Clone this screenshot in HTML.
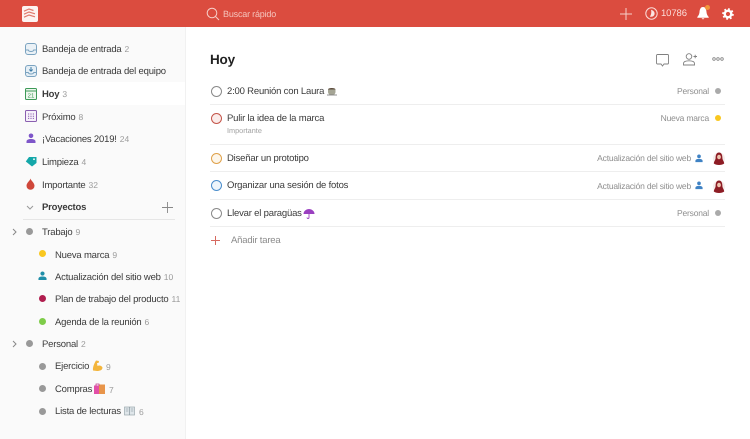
<!DOCTYPE html>
<html><head><meta charset="utf-8">
<style>
html,body{margin:0;padding:0;width:750px;height:439px;overflow:hidden;background:#fff}
body{position:relative;font-family:"Liberation Sans",sans-serif;color:#333;text-rendering:geometricPrecision}
.t{position:absolute;white-space:nowrap;font-size:9.5px;line-height:12px;letter-spacing:-.19px;color:#3a3a3a}
.t i{font-style:normal;font-size:8.5px;color:#999;margin-left:3px;letter-spacing:0}
.g{color:#8f8f8f;font-size:8.5px;letter-spacing:-.2px}
.d{position:absolute;border-radius:50%}
.c{position:absolute;left:211px;width:9px;height:9px;border-radius:50%;border:1.1px solid #8a8a8a}
.l{position:absolute;left:210px;width:515px;height:1px;background:#eee}
svg{position:absolute;overflow:visible}
</style></head><body>
<div style="position:absolute;left:0;top:0;width:186px;height:439px;background:#fafafa"></div>
<div style="position:absolute;left:185px;top:27px;width:1px;height:412px;background:#f1f1f1"></div>
<div style="position:absolute;left:0;top:0;width:750px;height:27px;background:#db4c3f"></div>
<div style="position:absolute;left:20px;top:82px;width:165px;height:23px;background:#fff"></div>

<!-- logo -->
<svg style="left:22px;top:6px" width="16" height="16" viewBox="0 0 16 16"><rect width="16" height="16" rx="2" fill="#fdf3f1"/><path d="M2 5.200 7 3l4.500 1.500M2 8.200 7 6l6 1.800M2 11.200 7 9l6 1.800" fill="none" stroke="#e07a6e" stroke-width="1.200"/></svg>
<!-- search -->
<svg style="left:206px;top:7px" width="14" height="14" viewBox="0 0 14 14"><circle cx="6" cy="6" r="4.800" fill="none" stroke="#f6cfc9" stroke-width="1"/><path d="M9.500 9.500 13 13" stroke="#f6cfc9" stroke-width="1"/></svg>
<div class="t" style="left:223px;top:8px;color:#f5c4bd;font-size:9px">Buscar rápido</div>
<svg style="left:620px;top:8px" width="12" height="12" viewBox="0 0 12 12"><path d="M6 0v12M0 6h12" stroke="#f6cfc9" stroke-width="1"/></svg>
<svg style="left:645px;top:7px" width="13" height="13" viewBox="0 0 13 13"><circle cx="6.500" cy="6.500" r="5.700" fill="none" stroke="#fbdcd8" stroke-width="1"/><path d="M6 2.800C8.800 3.500 10 5.500 9.500 7.500 8.800 9.500 6.500 10.200 4.800 9.500 6.300 8 6.600 5 6 2.800z" fill="#fbe7e4"/></svg>
<div class="t" style="left:661px;top:8px;color:#fbdcd8;font-size:9.500px;letter-spacing:-.1px">10786</div>
<svg style="left:697px;top:6px" width="12" height="14" viewBox="0 0 12 14"><path d="M6 1C3.500 1 2.700 3.500 2.500 6 2.300 8.500 1.300 9.800.3 11v.7h11.400V11c-1-1.200-2-2.500-2.200-5C9.300 3.500 8.500 1 6 1z" fill="#fff"/><path d="M4.500 12.300h3L6 13.500z" fill="#fff"/></svg>
<div class="d" style="left:705px;top:5px;width:5px;height:5px;background:#f2963a"></div>
<svg style="left:722px;top:8px" width="12" height="12" viewBox="0 0 12 12"><circle cx="6" cy="6" r="3.300" fill="none" stroke="#fff" stroke-width="2.400"/><circle cx="6" cy="6" r="5" fill="none" stroke="#fff" stroke-width="1.600" stroke-dasharray="1.900 2"/></svg>

<!-- sidebar icons -->
<svg style="left:25px;top:43px" width="12" height="12" viewBox="0 0 12 12"><rect x=".5" y=".5" width="11" height="11" rx="2.500" fill="#eaf1f6" stroke="#7ba3c0"/><path d="M.5 7h2.800c.5 2 4.900 2 5.400 0h2.800" fill="none" stroke="#7ba3c0"/></svg>
<svg style="left:25px;top:65px" width="12" height="12" viewBox="0 0 12 12"><rect x=".5" y=".5" width="11" height="11" rx="2.500" fill="#e4eef5" stroke="#7ba3c0"/><path d="M.5 7.500h2.800c.5 2 4.900 2 5.400 0h2.800" fill="none" stroke="#7ba3c0"/><path d="M6 2v4M4.300 4.500 6 6.200l1.700-1.700" fill="none" stroke="#3c7aa5" stroke-width="1"/></svg>
<svg style="left:25px;top:88px" width="12" height="12" viewBox="0 0 12 12"><rect x=".5" y=".5" width="11" height="11" rx="1" fill="#eef7ee" stroke="#3e9a58"/><path d="M.5 3h11" stroke="#3e9a58"/><text x="6" y="9.500" font-size="6" text-anchor="middle" font-family="Liberation Sans" fill="#3e9a58">21</text></svg>
<svg style="left:25px;top:110px" width="12" height="12" viewBox="0 0 12 12"><rect x=".5" y=".5" width="11" height="11" rx="1" fill="#f6f0fa" stroke="#8a5fb0"/><path d="M3 4h6M3 6.200h6M3 8.400h6" stroke="#8a5fb0" stroke-dasharray="1.200 1.200"/></svg>
<svg style="left:26px;top:133px" width="10" height="11" viewBox="0 0 10 11"><circle cx="5" cy="2.800" r="2.300" fill="#7e56c9"/><path d="M.5 10V8.500C.5 6.800 2.500 6 5 6s4.500.8 4.500 2.500V10z" fill="#7e56c9"/></svg>
<svg style="left:25px;top:156px" width="12" height="11" viewBox="0 0 12 11"><path d="M4 1h7.500v6L7 10.500 .8 5.500z" fill="#14a7a9"/><circle cx="9" cy="3.200" r=".9" fill="#fff"/></svg>
<svg style="left:26px;top:178px" width="9" height="12" viewBox="0 0 9 12"><path d="M4.500 .5C5 2.800 8.500 4.800 8.500 7.800a4 4 0 0 1-8 0C.5 4.800 4 2.800 4.500 .5z" fill="#cf473a"/></svg>

<div class="t" style="left:42px;top:43px">Bandeja de entrada<i>2</i></div>
<div class="t" style="left:42px;top:66px">Bandeja de entrada del equipo</div>
<div class="t" style="left:42px;top:88px;font-weight:bold">Hoy<i style="font-weight:normal">3</i></div>
<div class="t" style="left:42px;top:111px">Próximo<i>8</i></div>
<div class="t" style="left:42px;top:133px">¡Vacaciones 2019!<i>24</i></div>
<div class="t" style="left:42px;top:156px">Limpieza<i>4</i></div>
<div class="t" style="left:42px;top:179px">Importante<i>32</i></div>

<svg style="left:26px;top:205px" width="8" height="5" viewBox="0 0 8 5"><path d="M1 1l3 3 3-3" fill="none" stroke="#999"/></svg>
<div class="t" style="left:42px;top:202px;font-weight:bold">Proyectos</div>
<svg style="left:162px;top:202px" width="11" height="11" viewBox="0 0 11 11"><path d="M5.500 0v11M0 5.500h11" stroke="#888" stroke-width=".9"/></svg>
<div style="position:absolute;left:23px;top:219px;width:152px;height:1px;background:#e6e6e6"></div>

<svg style="left:12px;top:228px" width="5" height="8" viewBox="0 0 5 8"><path d="M1 1l3 3-3 3" fill="none" stroke="#888"/></svg>
<div class="d" style="left:26px;top:228px;width:7px;height:7px;background:#999"></div>
<div class="t" style="left:42px;top:226px">Trabajo<i>9</i></div>
<div class="d" style="left:39px;top:250px;width:7px;height:7px;background:#f9c71f"></div>
<div class="t" style="left:55px;top:249px">Nueva marca<i>9</i></div>
<svg style="left:38px;top:271px" width="9" height="10" viewBox="0 0 10 11"><circle cx="5" cy="2.800" r="2.300" fill="#1f8ea8"/><path d="M.5 10V8.500C.5 6.800 2.500 6 5 6s4.500.8 4.500 2.500V10z" fill="#1f8ea8"/></svg>
<div class="t" style="left:55px;top:271px">Actualización del sitio web<i>10</i></div>
<div class="d" style="left:39px;top:295px;width:7px;height:7px;background:#b01d4e"></div>
<div class="t" style="left:55px;top:293px">Plan de trabajo del producto<i>11</i></div>
<div class="d" style="left:39px;top:318px;width:7px;height:7px;background:#7ecc49"></div>
<div class="t" style="left:55px;top:316px">Agenda de la reunión<i>6</i></div>

<svg style="left:12px;top:340px" width="5" height="8" viewBox="0 0 5 8"><path d="M1 1l3 3-3 3" fill="none" stroke="#888"/></svg>
<div class="d" style="left:26px;top:340px;width:7px;height:7px;background:#999"></div>
<div class="t" style="left:42px;top:338px">Personal<i>2</i></div>
<div class="d" style="left:39px;top:363px;width:7px;height:7px;background:#999"></div>
<div class="t" style="left:55px;top:361px">Ejercicio</div>
<svg style="left:92px;top:360px" width="11" height="12" viewBox="0 0 11 12"><path d="M4 .5 7 1 6.500 3 5 3 5.500 6C7 5 9.500 5.500 10.500 7.500 10.500 10 8 11 5 11L1 10.500C.5 7 2.500 3 4 .5z" fill="#f3b53c"/></svg>
<div class="t" style="left:106px;top:361px;color:#999;font-size:8.500px">9</div>
<div class="d" style="left:39px;top:385px;width:7px;height:7px;background:#999"></div>
<div class="t" style="left:55px;top:384px">Compras</div>
<svg style="left:94px;top:383px" width="11" height="11" viewBox="0 0 11 11"><rect x="0" y="2.500" width="7" height="8.500" fill="#e24fa8"/><rect x="5" y="1.500" width="6" height="9.500" fill="#e8954a"/><path d="M2 3V1h3v2" fill="none" stroke="#c23c8c" stroke-width=".8"/></svg>
<div class="t" style="left:109px;top:384px;color:#999;font-size:8.500px">7</div>
<div class="d" style="left:39px;top:408px;width:7px;height:7px;background:#999"></div>
<div class="t" style="left:55px;top:406px">Lista de lecturas</div>
<svg style="left:124px;top:406px" width="11" height="10" viewBox="0 0 11 10"><rect x=".5" y="1" width="10" height="8" fill="#dfe6ea" stroke="#9aa7ad" stroke-width=".7"/><path d="M5.500 1v8M1.800 3h2.500M1.800 5h2.500M6.800 3h2.500M6.800 5h2.500" stroke="#7b8a92" stroke-width=".6"/></svg>
<div class="t" style="left:139px;top:406px;color:#999;font-size:8.500px">6</div>

<!-- main -->
<div class="t" style="left:210px;top:52px;font-size:13.500px;line-height:16px;font-weight:bold;color:#222;letter-spacing:-.2px">Hoy</div>
<svg style="left:656px;top:54px" width="13" height="13" viewBox="0 0 13 13"><path d="M1.500.5h10a1 1 0 0 1 1 1v7.500a1 1 0 0 1-1 1H8L6.500 12 5 10H1.500a1 1 0 0 1-1-1V1.500a1 1 0 0 1 1-1z" fill="none" stroke="#808080" stroke-width=".9"/></svg>
<svg style="left:683px;top:53px" width="14" height="13" viewBox="0 0 14 13"><circle cx="6" cy="3.500" r="2.800" fill="none" stroke="#808080" stroke-width=".9"/><path d="M.5 12v-1.500C.5 8.500 3 7.800 6 7.800s5.500.7 5.500 2.700V12zM10.500 3.500h3.500M12.200 1.800v3.500" fill="none" stroke="#808080" stroke-width=".9"/></svg>
<svg style="left:712px;top:57px" width="12" height="4" viewBox="0 0 12 4"><circle cx="2" cy="2" r="1.300" fill="none" stroke="#808080" stroke-width=".8"/><circle cx="6" cy="2" r="1.300" fill="none" stroke="#808080" stroke-width=".8"/><circle cx="10" cy="2" r="1.300" fill="none" stroke="#808080" stroke-width=".8"/></svg>

<div class="c" style="top:86px"></div>
<div class="t" style="left:227px;top:86px">2:00 Reunión con Laura</div>
<svg style="left:327px;top:87px" width="10" height="9" viewBox="0 0 10 9"><path d="M1 2.500h7.500v2.500a3 3 0 0 1-3 3h-1.500a3 3 0 0 1-3-3z" fill="#a5a595"/><path d="M1 2.500a3.700 1.500 0 0 1 7.500 0z" fill="#5a4a3a"/><path d="M0 8h10" stroke="#777" stroke-width=".8"/></svg>
<div class="t g" style="right:41px;top:85px">Personal</div>
<div class="d" style="left:715px;top:88px;width:6px;height:6px;background:#aaa"></div>
<div class="l" style="top:104px"></div>

<div class="c" style="top:113px;border-color:#c4554a;background:#fbecea"></div>
<div class="t" style="left:227px;top:113px">Pulir la idea de la marca</div>
<div class="t g" style="left:227px;top:125px;font-size:7.300px;color:#a0a0a0;letter-spacing:0">Importante</div>
<div class="t g" style="right:41px;top:112px">Nueva marca</div>
<div class="d" style="left:715px;top:115px;width:6px;height:6px;background:#f9c71f"></div>
<div class="l" style="top:144px"></div>

<div class="c" style="top:153px;border-color:#dfa14a;background:#fdf6ea"></div>
<div class="t" style="left:227px;top:153px">Diseñar un prototipo</div>
<div class="t g" style="right:59px;top:152px">Actualización del sitio web</div>
<svg style="left:695px;top:154px" width="8" height="9" viewBox="0 0 10 11"><circle cx="5" cy="2.800" r="2.300" fill="#3f82c4"/><path d="M.5 10V8.500C.5 6.800 2.500 6 5 6s4.500.8 4.500 2.500V10z" fill="#3f82c4"/></svg>
<svg style="left:712.500px;top:152px" width="12" height="13" viewBox="0 0 12 13"><circle cx="6" cy="6.500" r="6" fill="#f5ecea"/><path d="M6 .5C3.200 .5 2.600 3.500 2.600 6 2.600 8 .8 9.500.8 11.500 3 13.500 9 13.500 11.200 11.500 11.200 9.500 9.400 8 9.400 6 9.400 3.500 8.800 .5 6 .5z" fill="#8d1c24"/><ellipse cx="6" cy="5" rx="1.900" ry="2.300" fill="#eec5b0"/></svg>
<div class="l" style="top:171px"></div>

<div class="c" style="top:180px;border-color:#4a8dcc;background:#eef5fb"></div>
<div class="t" style="left:227px;top:180px">Organizar una sesión de fotos</div>
<div class="t g" style="right:59px;top:180px">Actualización del sitio web</div>
<svg style="left:695px;top:181px" width="8" height="9" viewBox="0 0 10 11"><circle cx="5" cy="2.800" r="2.300" fill="#3f82c4"/><path d="M.5 10V8.500C.5 6.800 2.500 6 5 6s4.500.8 4.500 2.500V10z" fill="#3f82c4"/></svg>
<svg style="left:712.500px;top:180px" width="12" height="13" viewBox="0 0 12 13"><circle cx="6" cy="6.500" r="6" fill="#f5ecea"/><path d="M6 .5C3.200 .5 2.600 3.500 2.600 6 2.600 8 .8 9.500.8 11.500 3 13.500 9 13.500 11.200 11.500 11.200 9.500 9.400 8 9.400 6 9.400 3.500 8.800 .5 6 .5z" fill="#8d1c24"/><ellipse cx="6" cy="5" rx="1.900" ry="2.300" fill="#eec5b0"/></svg>
<div class="l" style="top:199px"></div>

<div class="c" style="top:208px"></div>
<div class="t" style="left:227px;top:208px">Llevar el paragüas</div>
<svg style="left:303px;top:208px" width="12" height="11" viewBox="0 0 12 11"><path d="M.5 6a5.500 5 0 0 1 11 0z" fill="#9a3fc0"/><path d="M6 6v3.500a1 1 0 0 1-2 0" fill="none" stroke="#9a3fc0" stroke-width=".9"/></svg>
<div class="t g" style="right:41px;top:207px">Personal</div>
<div class="d" style="left:715px;top:210px;width:6px;height:6px;background:#aaa"></div>
<div class="l" style="top:226px"></div>

<svg style="left:211px;top:236px" width="9" height="9" viewBox="0 0 9 9"><path d="M4.500 0v9M0 4.500h9" stroke="#d66a60" stroke-width="1"/></svg>
<div class="t" style="left:231px;top:235px;color:#8a8a8a">Añadir tarea</div>
</body></html>
